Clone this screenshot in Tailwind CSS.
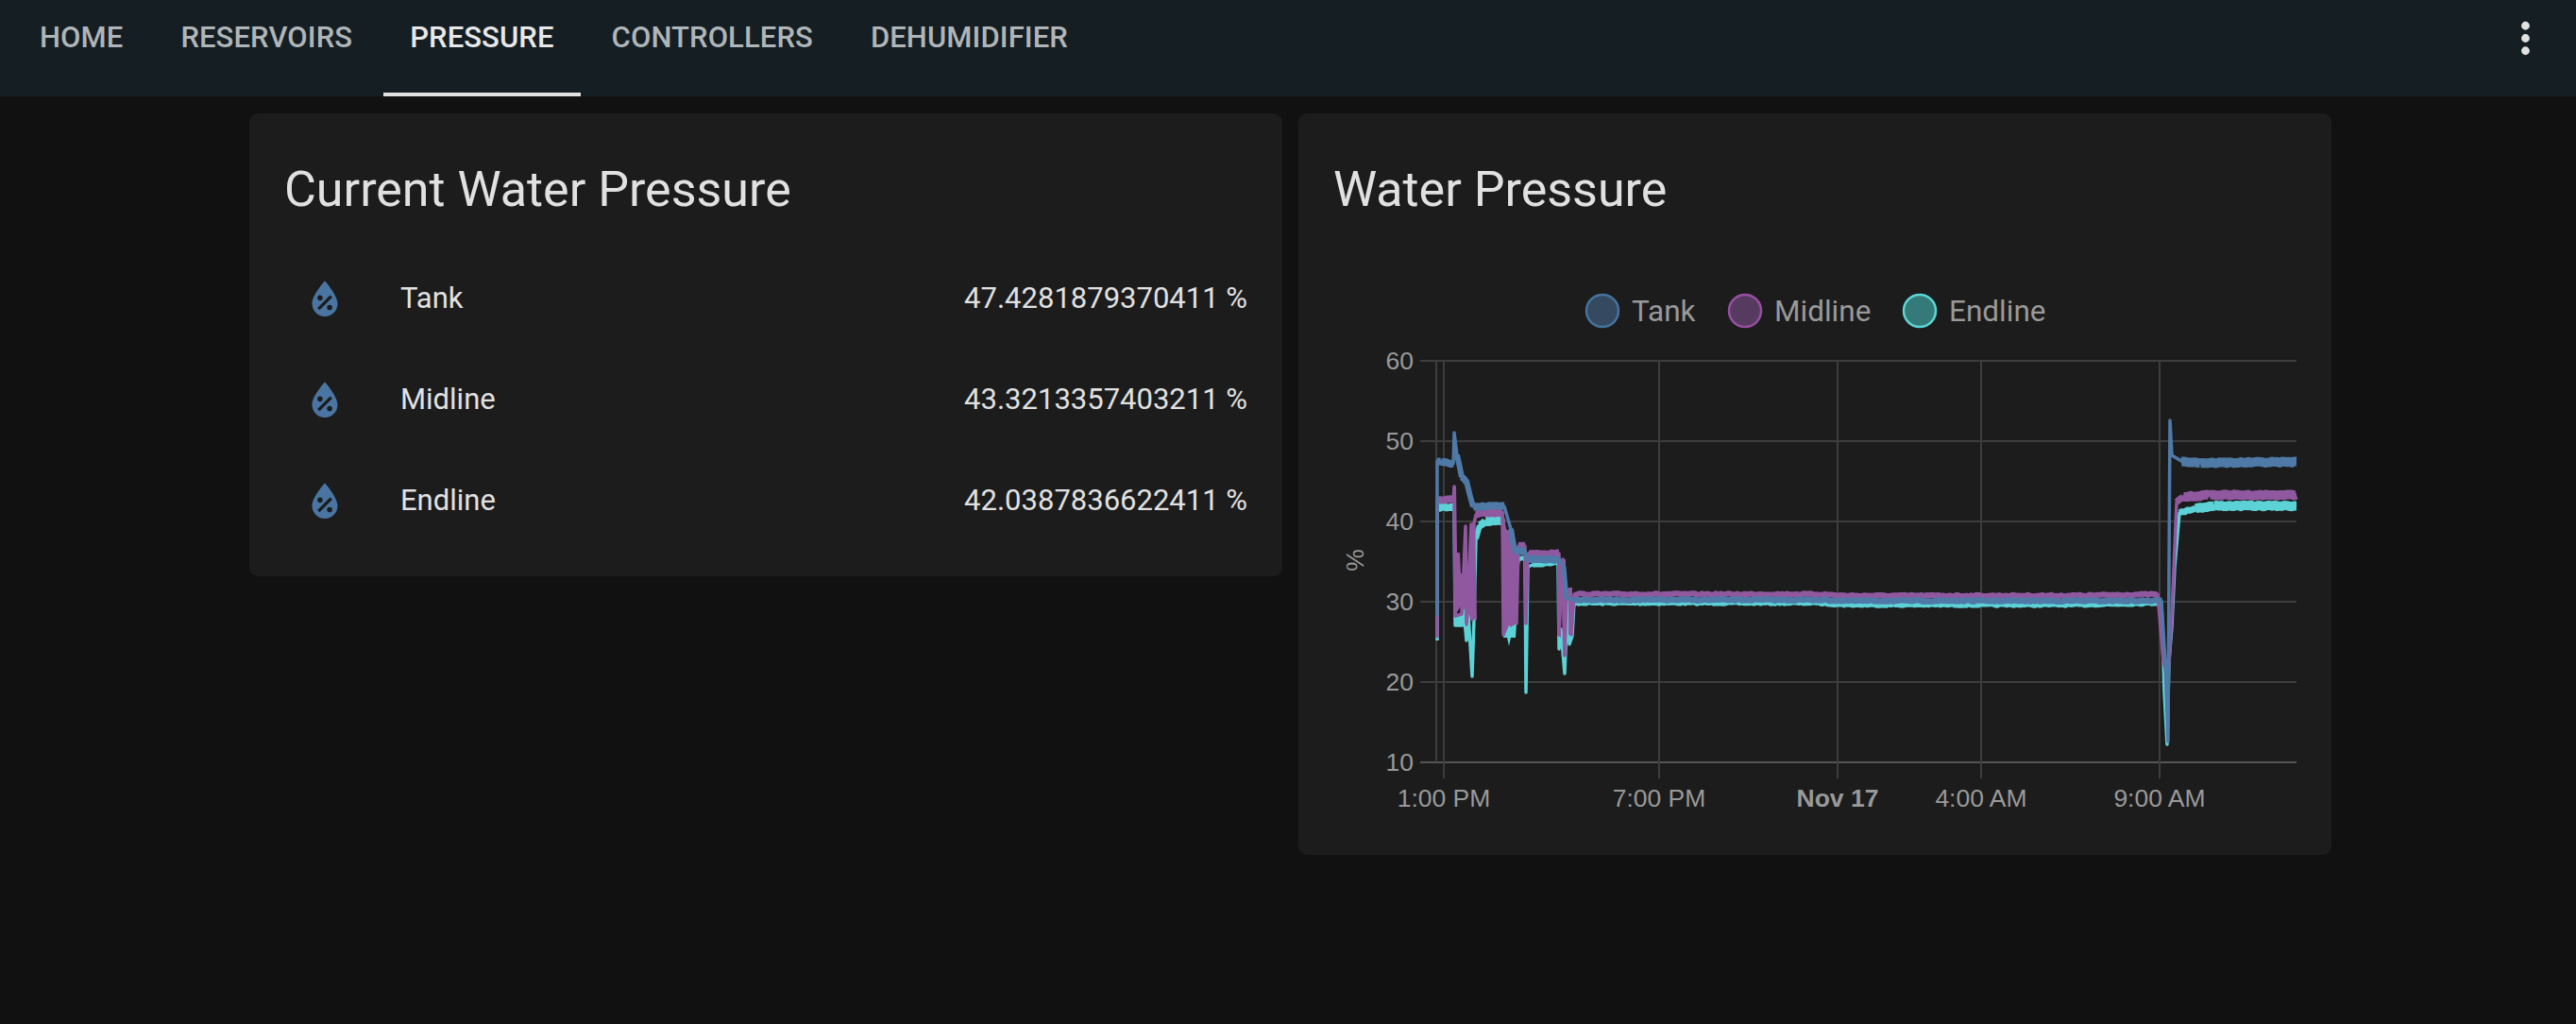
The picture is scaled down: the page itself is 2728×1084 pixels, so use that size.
<!doctype html>
<html>
<head>
  <meta charset="UTF-8">
  <meta name="viewport" content="width=device-width, initial-scale=1.0">
  <script src="https://cdn.jsdelivr.net/npm/@tailwindcss/browser@4"></script>
</head>
<body class="h-screen overflow-hidden bg-[#111111] font-['Roboto',sans-serif] text-[#e1e1e1]">
  <header class="h-[102px] bg-[#141e23] flex items-start pl-[14px] pr-[27px]">
    <nav class="flex gap-[5px] text-[31px] font-medium uppercase leading-[80px] text-[#b0b5b7] tracking-[0.1px]">
      <a class="h-[102px] px-[28px]">Home</a>
      <a class="h-[102px] px-[28px]">Reservoirs</a>
      <a class="h-[102px] px-[28px] text-[#e8e8e8] border-b-[4px] border-[#e1e1e1]">Pressure</a>
      <a class="h-[102px] px-[28px]">Controllers</a>
      <a class="h-[102px] px-[28px]">Dehumidifier</a>
    </nav>
    <svg class="ml-auto mt-[14px] w-[53px] h-[53px] fill-[#e1e1e1]" viewBox="0 0 24 24"><path d="M12,16A2,2 0 0,1 14,18A2,2 0 0,1 12,20A2,2 0 0,1 10,18A2,2 0 0,1 12,16M12,10A2,2 0 0,1 14,12A2,2 0 0,1 12,14A2,2 0 0,1 10,12A2,2 0 0,1 12,10M12,4A2,2 0 0,1 14,6A2,2 0 0,1 12,8A2,2 0 0,1 10,6A2,2 0 0,1 12,4Z"/></svg>
  </header>

  <main class="flex items-start gap-[17px] pl-[264px] pt-[18px]">
    <section class="w-[1094px] h-[490px] bg-[#1c1c1c] rounded-[9px] px-[37px]">
      <h1 class="text-[52px] leading-[70px] pt-[46px] h-[143px] font-normal">Current Water Pressure</h1>
      <ul class="flex flex-col">
        <li class="h-[107px] flex items-center text-[31px]">
          <svg class="w-[54px] h-[54px] ml-[16px] fill-[#4a75a2]" viewBox="0 0 24 24"><path fill-rule="evenodd" d="M12,3.25C12,3.25 6,10 6,14C6,17.32 8.69,20 12,20A6,6 0 0,0 18,14C18,10 12,3.25 12,3.25M14.47,9.97L15.53,11.03L9.53,17.03L8.47,15.97M9.75,10A1.25,1.25 0 0,1 11,11.25A1.25,1.25 0 0,1 9.75,12.5A1.25,1.25 0 0,1 8.5,11.25A1.25,1.25 0 0,1 9.75,10M14.25,14.5A1.25,1.25 0 0,1 15.5,15.75A1.25,1.25 0 0,1 14.25,17A1.25,1.25 0 0,1 13,15.75A1.25,1.25 0 0,1 14.25,14.5Z"/></svg>
          <span class="ml-[53px]">Tank</span>
          <span class="ml-auto">47.4281879370411 %</span>
        </li>
        <li class="h-[107px] flex items-center text-[31px]">
          <svg class="w-[54px] h-[54px] ml-[16px] fill-[#4a75a2]" viewBox="0 0 24 24"><path fill-rule="evenodd" d="M12,3.25C12,3.25 6,10 6,14C6,17.32 8.69,20 12,20A6,6 0 0,0 18,14C18,10 12,3.25 12,3.25M14.47,9.97L15.53,11.03L9.53,17.03L8.47,15.97M9.75,10A1.25,1.25 0 0,1 11,11.25A1.25,1.25 0 0,1 9.75,12.5A1.25,1.25 0 0,1 8.5,11.25A1.25,1.25 0 0,1 9.75,10M14.25,14.5A1.25,1.25 0 0,1 15.5,15.75A1.25,1.25 0 0,1 14.25,17A1.25,1.25 0 0,1 13,15.75A1.25,1.25 0 0,1 14.25,14.5Z"/></svg>
          <span class="ml-[53px]">Midline</span>
          <span class="ml-auto">43.3213357403211 %</span>
        </li>
        <li class="h-[107px] flex items-center text-[31px]">
          <svg class="w-[54px] h-[54px] ml-[16px] fill-[#4a75a2]" viewBox="0 0 24 24"><path fill-rule="evenodd" d="M12,3.25C12,3.25 6,10 6,14C6,17.32 8.69,20 12,20A6,6 0 0,0 18,14C18,10 12,3.25 12,3.25M14.47,9.97L15.53,11.03L9.53,17.03L8.47,15.97M9.75,10A1.25,1.25 0 0,1 11,11.25A1.25,1.25 0 0,1 9.75,12.5A1.25,1.25 0 0,1 8.5,11.25A1.25,1.25 0 0,1 9.75,10M14.25,14.5A1.25,1.25 0 0,1 15.5,15.75A1.25,1.25 0 0,1 14.25,17A1.25,1.25 0 0,1 13,15.75A1.25,1.25 0 0,1 14.25,14.5Z"/></svg>
          <span class="ml-[53px]">Endline</span>
          <span class="ml-auto">42.0387836622411 %</span>
        </li>
      </ul>
    </section>

    <section class="w-[1094px] h-[785px] bg-[#1c1c1c] rounded-[9px] px-[37px]">
      <h1 class="text-[52px] leading-[70px] pt-[46px] h-[160px] font-normal">Water Pressure</h1>
      <svg id="chart" class="block -ml-[37px] w-[1094px] h-[625px]" viewBox="1375 280 1094 625" font-family="Liberation Sans, sans-serif" font-size="26.5" fill="#999999">
        <!-- legend -->
        <g font-family="Roboto, sans-serif" font-size="31.5">
          <circle cx="1697" cy="329" r="17" fill="#354a60" stroke="#44739e" stroke-width="2.5"/>
          <text x="1728" y="340">Tank</text>
          <circle cx="1848" cy="329" r="17" fill="#563a5f" stroke="#984ea3" stroke-width="2.5"/>
          <text x="1879" y="340">Midline</text>
          <circle cx="2033" cy="329" r="17" fill="#347a78" stroke="#5cd6d6" stroke-width="2.5"/>
          <text x="2064" y="340">Endline</text>
        </g>
        <!-- grid -->
        <g stroke="#3d3d3d" stroke-width="2">
          <path d="M1504 382H2432M1504 467H2432M1504 552H2432M1504 637H2432M1504 722H2432"/>
          <path d="M1504 807H2432" stroke="#555555"/>
          <path d="M1521 382V807M1529 382V824M1757 382V824M1946 382V824M2098 382V824M2287 382V824"/>
        </g>
        <!-- y axis -->
        <g text-anchor="end">
          <text x="1497" y="391">60</text>
          <text x="1497" y="476">50</text>
          <text x="1497" y="561">40</text>
          <text x="1497" y="646">30</text>
          <text x="1497" y="731">20</text>
          <text x="1497" y="816">10</text>
        </g>
        <text x="1444" y="593" transform="rotate(-90 1444 593)" text-anchor="middle">%</text>
        <!-- x axis -->
        <g text-anchor="middle">
          <text x="1529" y="854">1:00 PM</text>
          <text x="1757" y="854">7:00 PM</text>
          <text x="1946" y="854" font-weight="700">Nov 17</text>
          <text x="2098" y="854">4:00 AM</text>
          <text x="2287" y="854">9:00 AM</text>
        </g>
        <g id="series" stroke-linejoin="round"></g>
      </svg>
    </section>
  </main>

  <script>
    // [x, y, band] in page pixels, read off the screenshot. band = how thick the noisy trace is on the segment starting there
    const endline = {
      color: '#5cd2d6',
      line: [[1522,678],[1522,537,8],[1540,537],[1541,662],[1549,662],[1550,645],[1553,678],[1555,650],[1559,716],[1561,655],[1563,570,6],[1567,556,8],[1573,552,10],[1592,550],[1594,672],[1605,620],[1608,592,5],[1615,590],[1616,733],[1618,600],[1623,598,5],[1650,596],[1651,687],[1653,666],[1657,713],[1660,637],[1662,682],[1665,673],[1667,638,6],[1925,638,6],[1955,640,6],[2200,640,6],[2289,638],[2292,733],[2295,788],[2297,700],[2300,663],[2303,600],[2308,543,7],[2325,538,10],[2345,535.5,10],[2432,535.5]],
      fills: ['1540,650 1549,650 1549,662 1540,662', '1592,660 1606,660 1605,675 1600,675 1598,684 1596,675 1592,675']
    };
    const midline = {
      color: '#8f589f',
      line: [[1522,675],[1522,529,8],[1539,529],[1540,515],[1541,652],[1548,650],[1552,557],[1553,660],[1558,555],[1559,656],[1561,554],[1563,545,8],[1570,542,10],[1591,542],[1592,672],[1595,565],[1600,575],[1605,582],[1606,660],[1608,578,9],[1615,578],[1616,660],[1618,586,8],[1651,586],[1651,672],[1655,592],[1657,694],[1659,625],[1663,625],[1664,672],[1667,629,6],[1925,629,6],[1955,630.5,6],[2200,630.5,6],[2285,629],[2291,700],[2296,720],[2300,650],[2305,532,7],[2312,526,10],[2340,524,10],[2432,524]],
      fills: [
        '1540,515 1542,515 1543,585 1546,585 1547,607 1549,607 1551,557 1553,557 1554,600 1556,607 1557,603 1558,555 1562,553 1564,656 1557,655 1556,650 1554,663 1552,663 1551,644 1548,650 1546,643 1541,652',
        '1592,540 1595,560 1601,565 1605,582 1606,660 1600,664 1598,662 1593,674',
        '1649,590 1653,590 1653,675 1649,672',
        '1654,592 1658,592 1659,694 1655,694',
        '1661,622 1665,622 1665,672 1661,672'
      ]
    };
    const tank = {
      color: '#4f79a6',
      line: [[1522,652],[1522,488,8],[1526,489,8],[1539,491],[1540,458],[1543,482,6],[1548,505,7],[1553,510,6],[1560,536,8],[1593,536],[1600,560,6],[1604,583,8],[1615,583],[1617,592,8],[1651,592],[1656,600,5],[1659,633],[1667,635,6.5],[1925,635,6.5],[1955,636,6.5],[2200,636,6.5],[2289,636],[2293,700],[2296,785],[2297,600],[2298,445],[2300,482],[2310,488,10],[2330,490,10],[2432,489]],
      fills: []
    };

    // seeded so the picture is the same on every load
    let seed = 7;
    const rand = () => (seed = (seed * 16807) % 2147483647) / 2147483647;

    const NS = 'http://www.w3.org/2000/svg';
    const chart = document.querySelector('#series');

    function addLine(points, color, width) {
      const line = document.createElementNS(NS, 'polyline');
      line.setAttribute('points', points.map(p => p[0].toFixed(1) + ',' + p[1].toFixed(1)).join(' '));
      line.setAttribute('fill', 'none');
      line.setAttribute('stroke', color);
      line.setAttribute('stroke-width', width);
      chart.appendChild(line);
    }

    function addBand(p1, p2, color, width) {
      const steps = Math.max(2, Math.floor((p2[0] - p1[0]) / 2.5));
      const points = [];
      for (let s = 0; s <= steps; s++) {
        const t = s / steps;
        points.push([p1[0] + (p2[0] - p1[0]) * t, p1[1] + (p2[1] - p1[1]) * t + (rand() - 0.5) * 1.6]);
      }
      addLine(points, color, width);
    }

    [endline, midline, tank].forEach(series => {
      series.fills.forEach(points => {
        const fill = document.createElementNS(NS, 'polygon');
        fill.setAttribute('points', points);
        fill.setAttribute('fill', series.color);
        chart.appendChild(fill);
      });
      addLine(series.line, series.color, 3.5);
      series.line.forEach((p, i) => {
        if (p[2]) addBand(p, series.line[i + 1], series.color, p[2]);
      });
    });
  </script>
</body>
</html>
